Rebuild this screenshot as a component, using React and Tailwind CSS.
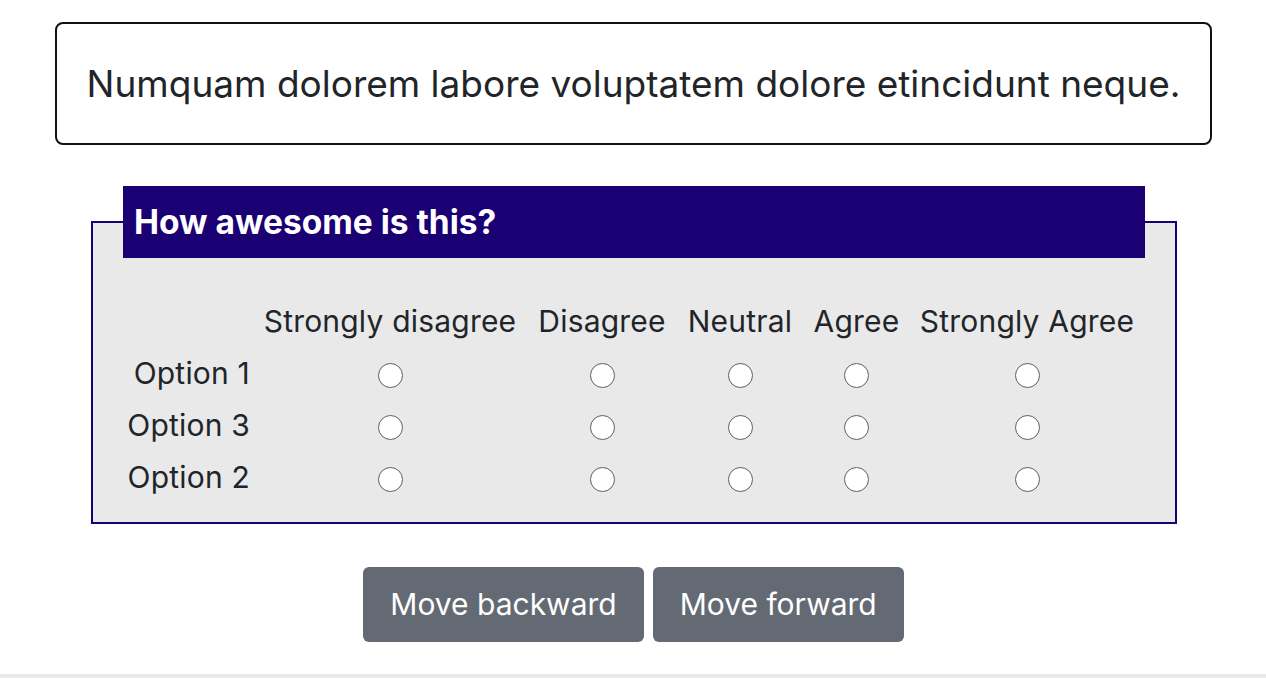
const columns = ["Strongly disagree", "Disagree", "Neutral", "Agree", "Strongly Agree"];
const rows = ["Option 1", "Option 3", "Option 2"];

export default function App() {
  return (
    <div className="min-h-[678px] bg-white font-['Inter',sans-serif] text-[#212529] flex flex-col">
      <div className="pl-[55px] pr-[54px] pt-[22px]">
        <div className="flex h-[123px] items-center justify-center rounded-lg border-2 border-[#111]">
          <p className="text-[37px] leading-none">
            Numquam dolorem labore voluptatem dolore etincidunt neque.
          </p>
        </div>

        <fieldset className="ml-[36px] mt-[41px] w-[1086px] border-2 border-[#1a0073] bg-[#e9e9e9] px-[30px] pb-[19px]">
          <legend className="w-full bg-[#1a0073] px-[11px] py-[15px] text-[33.5px] font-bold leading-[42px] text-white">
            How awesome is this?
          </legend>

          <div className="mt-[37px] grid grid-cols-[129px_276px_148px_128px_105px_236px] text-[30px] leading-[36px] tracking-[0.2px]">
            <div className="h-[52px]" />
            {columns.map((c) => (
              <div key={c} className="flex h-[52px] items-center justify-center whitespace-nowrap">
                {c}
              </div>
            ))}
            {rows.map((r) => (
              <Row key={r} label={r} />
            ))}
          </div>
        </fieldset>

        <div className="mt-[43px] flex justify-center gap-[9px]">
          <button className="h-[75px] rounded-md bg-[#646a73] px-[27px] text-[30px] text-white">
            Move backward
          </button>
          <button className="h-[75px] rounded-md bg-[#646a73] px-[27px] text-[30px] text-white">
            Move forward
          </button>
        </div>
      </div>
      <div className="mt-[32px] h-[10px] bg-[#e9e9e9]" />
    </div>
  );
}

function Row({ label }) {
  return (
    <>
      <div className="flex h-[52px] items-center justify-end pr-[2px] whitespace-nowrap">{label}</div>
      {columns.map((c) => (
        <div key={c} className="flex h-[52px] items-center justify-center pt-[5px]">
          <input
            type="radio"
            name={label}
            className="h-[25px] w-[25px] appearance-none rounded-full border-[1.5px] border-[#5f5f5f] bg-white"
          />
        </div>
      ))}
    </>
  );
}
